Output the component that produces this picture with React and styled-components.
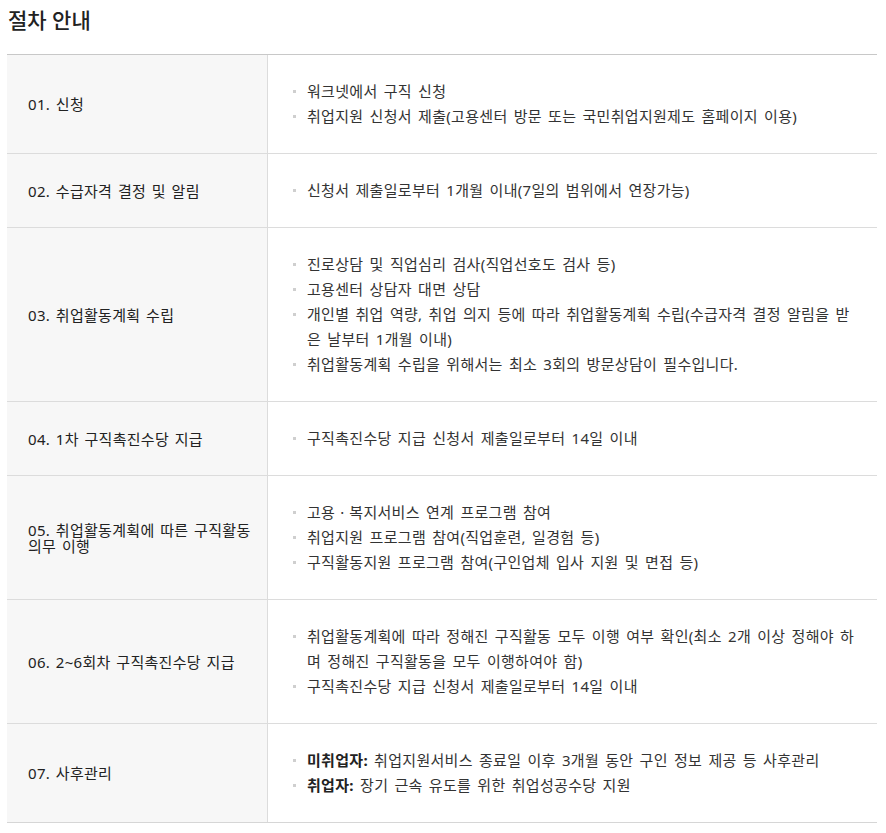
import React from 'react'
import styled, { createGlobalStyle } from 'styled-components'

const steps = [
  {
    title: '01. 신청',
    items: ['워크넷에서 구직 신청', '취업지원 신청서 제출(고용센터 방문 또는 국민취업지원제도 홈페이지 이용)'],
  },
  {
    title: '02. 수급자격 결정 및 알림',
    items: ['신청서 제출일로부터 1개월 이내(7일의 범위에서 연장가능)'],
  },
  {
    title: '03. 취업활동계획 수립',
    items: [
      '진로상담 및 직업심리 검사(직업선호도 검사 등)',
      '고용센터 상담자 대면 상담',
      '개인별 취업 역량, 취업 의지 등에 따라 취업활동계획 수립(수급자격 결정 알림을 받은 날부터 1개월 이내)',
      '취업활동계획 수립을 위해서는 최소 3회의 방문상담이 필수입니다.',
    ],
  },
  {
    title: '04. 1차 구직촉진수당 지급',
    items: ['구직촉진수당 지급 신청서 제출일로부터 14일 이내'],
  },
  {
    title: '05. 취업활동계획에 따른 구직활동 의무 이행',
    items: [
      '고용ㆍ복지서비스 연계 프로그램 참여',
      '취업지원 프로그램 참여(직업훈련, 일경험 등)',
      '구직활동지원 프로그램 참여(구인업체 입사 지원 및 면접 등)',
    ],
  },
  {
    title: '06. 2~6회차 구직촉진수당 지급',
    items: [
      '취업활동계획에 따라 정해진 구직활동 모두 이행 여부 확인(최소 2개 이상 정해야 하며 정해진 구직활동을 모두 이행하여야 함)',
      '구직촉진수당 지급 신청서 제출일로부터 14일 이내',
    ],
  },
  {
    title: '07. 사후관리',
    items: [
      { label: '미취업자:', text: ' 취업지원서비스 종료일 이후 3개월 동안 구인 정보 제공 등 사후관리' },
      { label: '취업자:', text: ' 장기 근속 유도를 위한 취업성공수당 지원' },
    ],
  },
]

const GlobalStyle = createGlobalStyle`
  body {
    margin: 0;
    background: #fff;
    font-family: 'Noto Sans', 'Noto Sans CJK KR', sans-serif;
  }
`

export default function App() {
  return (
    <Page>
      <GlobalStyle />
      <Title>절차 안내</Title>
      <Table>
        {steps.map((step) => (
          <Row key={step.title}>
            <StepName>{step.title}</StepName>
            <StepBody>
              <BulletList>
                {step.items.map((item, i) => (
                  <Bullet key={i}>
                    {typeof item === 'string' ? (
                      item
                    ) : (
                      <>
                        <strong>{item.label}</strong>
                        {item.text}
                      </>
                    )}
                  </Bullet>
                ))}
              </BulletList>
            </StepBody>
          </Row>
        ))}
      </Table>
    </Page>
  )
}

const Page = styled.div`
  padding: 6px 9px 0 7px;
  width: 870px;
`

const Title = styled.h2`
  margin: 0 0 20px 1px;
  font-size: 21px;
  font-weight: 500;
  line-height: 28px;
  color: #222;
`

const Table = styled.div`
  border-top: 1px solid #c8c8c8;
  border-bottom: 1px solid #d6d6d6;
`

const Row = styled.div`
  display: grid;
  grid-template-columns: 261px 1fr;
  & + & {
    border-top: 1px solid #dcdcdc;
  }
`

const StepName = styled.div`
  display: flex;
  align-items: center;
  padding: 0 4px 0 21px;
  background: #f7f7f7;
  border-right: 1px solid #dcdcdc;
  font-size: 15px;
  line-height: 16px;
  letter-spacing: 0.3px;
  word-spacing: 1.5px;
  color: #222;
`

const StepBody = styled.div`
  padding: 24px 19px 24px 24px;
`

const BulletList = styled.ul`
  margin: 0;
  padding: 0;
  list-style: none;
`

const Bullet = styled.li`
  position: relative;
  padding-left: 15px;
  font-size: 15px;
  line-height: 25px;
  letter-spacing: 0.3px;
  word-spacing: 2px;
  color: #333;

  &::before {
    content: '';
    position: absolute;
    left: 1px;
    top: 11px;
    width: 3px;
    height: 3px;
    background: #cfcfcf;
  }

  strong {
    font-weight: 700;
    color: #222;
  }
`
